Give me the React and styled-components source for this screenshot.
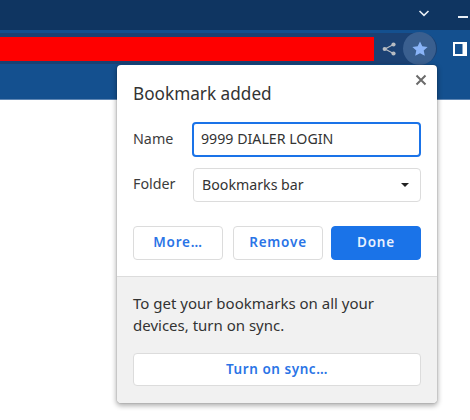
import React from "react";
import styled, { createGlobalStyle } from "styled-components";

const Global = createGlobalStyle`
  html, body { margin: 0; padding: 0; background: #fff; }
  body { font-family: "Noto Sans", "Open Sans", sans-serif; overflow: hidden; }
`;
const Page = styled.div`
  position: relative;
  width: 470px;
  height: 420px;
  background: #fff;
  overflow: hidden;
`;
const TitleBar = styled.header`
  height: 30px;
  background: #0f3561;
  display: flex;
  align-items: flex-start;
  justify-content: flex-end;
`;
const TitleIcons = styled.div`
  display: flex;
  align-items: flex-start;
  gap: 28px;
  padding: 10px 2px 0 0;
`;
const Toolbar = styled.div`
  height: 70px;
  background: #14508f;
  border-bottom: 1px solid #5f86b3;
  box-sizing: border-box;
  padding-top: 3px;
  display: flex;
  align-items: flex-start;
`;
const Omnibox = styled.div`
  width: 437px;
  height: 31px;
  background: #1b4173;
  border-radius: 0 16px 16px 0;
  display: flex;
  align-items: center;
  flex: none;
`;
const RedBar = styled.div`
  width: 374px;
  height: 24px;
  background: #fe0000;
  flex: none;
`;
const ShareSlot = styled.div`
  width: 30px;
  display: flex;
  justify-content: center;
  flex: none;
`;
const StarSlot = styled.div`
  width: 33px;
  height: 33px;
  margin-left: -1px;
  border-radius: 50%;
  background: #3a5f8f;
  display: flex;
  align-items: center;
  justify-content: center;
  flex: none;
`;
const WindowSlot = styled.div`
  margin-left: 16px;
  margin-top: 9px;
  flex: none;
  display: flex;
`;
const Popup = styled.section`
  position: absolute;
  left: 117px;
  top: 65px;
  width: 320px;
  height: 338px;
  box-sizing: border-box;
  background: #fff;
  border-radius: 4px;
  box-shadow: 0 0 1px rgba(0,0,0,.55), 0 2px 5px 1px rgba(0,0,0,.3);
  display: flex;
  flex-direction: column;
  overflow: hidden;
`;
const Main = styled.div`
  position: relative;
  height: 211px;
  flex: none;
  box-sizing: border-box;
  padding: 16px 16px 0;
`;
const Close = styled.button`
  position: absolute;
  top: 9px;
  right: 10px;
  width: 12px;
  height: 12px;
  padding: 0;
  border: 0;
  background: none;
  display: flex;
`;
const Title = styled.h2`
  margin: 0;
  font-size: 17.2px;
  line-height: 26px;
  font-weight: 400;
  color: #333;
`;
const Row = styled.div`
  display: flex;
  align-items: center;
  margin-top: ${p => p.$top}px;
`;
const Label = styled.label`
  width: 59px;
  flex: none;
  font-size: 14.3px;
  line-height: 18px;
  margin-top: -2px;
  color: #3c3c3c;
`;
const NameInput = styled.div`
  width: 229px;
  height: 35px;
  box-sizing: border-box;
  border: 2px solid #1a73e8;
  border-radius: 4px;
  padding: 0 0 2px 7px;
  display: flex;
  align-items: center;
  font-size: 14.2px;
  color: #333;
`;
const Select = styled.div`
  width: 228px;
  height: 34px;
  margin-left: 1px;
  box-sizing: border-box;
  border: 1px solid #dcdcdc;
  border-radius: 4px;
  padding: 0 11px 2px 8px;
  display: flex;
  align-items: center;
  justify-content: space-between;
  font-size: 14.2px;
  color: #333;
`;
const Caret = styled.span`
  width: 0;
  height: 0;
  margin-top: 2px;
  border-left: 4px solid transparent;
  border-right: 4px solid transparent;
  border-top: 4px solid #222;
`;
const Buttons = styled.div`
  display: flex;
  margin-top: 24px;
`;
const Btn = styled.button`
  width: 90px;
  height: 34px;
  margin-right: ${p => p.$gap || 0}px;
  box-sizing: border-box;
  border: 1px solid ${p => (p.$primary ? "#1a73e8" : "#dcdcdc")};
  border-radius: 4px;
  background: ${p => (p.$primary ? "#1a73e8" : "#fff")};
  color: ${p => (p.$primary ? "#e8f0fe" : "#2a74e6")};
  font: 600 13.5px "Noto Sans", sans-serif;
  letter-spacing: 0.8px;
  padding: 0 0 2px;
`;
const Footer = styled.div`
  flex: 1;
  box-sizing: border-box;
  background: #f1f1f1;
  border-top: 1px solid #dcdcdc;
  padding: 15px 16px 0;
`;
const Promo = styled.p`
  margin: 0;
  font-size: 15px;
  line-height: 22px;
  color: #333;
`;
const SyncBtn = styled.button`
  display: block;
  width: 288px;
  height: 33px;
  margin-top: 17px;
  box-sizing: border-box;
  border: 1px solid #dcdcdc;
  border-radius: 4px;
  background: #fff;
  color: #2a74e6;
  font: 600 13.5px "Noto Sans", sans-serif;
  letter-spacing: 0.55px;
  padding: 0 0 2px;
`;

export default function App() {
  return (
    <Page>
      <Global />
      <TitleBar>
        <TitleIcons>
          <svg width="12" height="7" viewBox="0 0 12 7"><path d="M1.5 1 6 5.4 10.5 1" fill="none" stroke="#e8eef5" strokeWidth="1.6" /></svg>
          <svg width="10" height="8" viewBox="0 0 10 8"><rect x="0" y="6" width="10" height="2" fill="#e8eef5" /></svg>
        </TitleIcons>
      </TitleBar>
      <Toolbar>
        <Omnibox>
          <RedBar />
          <ShareSlot>
            <svg width="14" height="14" viewBox="0 0 14 14">
              <path d="M11.5 2.5 3 7l8.5 4.5" fill="none" stroke="#b8bcc2" strokeWidth="1.2" />
              <circle cx="11.5" cy="2.5" r="2.1" fill="#b8bcc2" />
              <circle cx="2.7" cy="7" r="2.1" fill="#b8bcc2" />
              <circle cx="11.5" cy="11.5" r="2.1" fill="#b8bcc2" />
            </svg>
          </ShareSlot>
          <StarSlot>
            <svg width="16" height="15" viewBox="0 0 16 15">
              <path d="M8 0.4 10.3 5.3 15.6 5.9 11.7 9.5 12.8 14.8 8 12.2 3.2 14.8 4.3 9.5 0.4 5.9 5.7 5.3Z" fill="#8ab4f8" />
            </svg>
          </StarSlot>
        </Omnibox>
        <WindowSlot>
          <svg width="14" height="14" viewBox="0 0 14 14">
            <rect x="0" y="0" width="14" height="14" fill="#fff" />
            <rect x="2" y="2" width="7.5" height="10" fill="#14508f" />
          </svg>
        </WindowSlot>
      </Toolbar>
      <Popup>
        <Main>
          <Close aria-label="Close">
            <svg width="12" height="12" viewBox="0 0 12 12"><path d="M1.5 1.5l9 9M10.5 1.5l-9 9" stroke="#6b6b6b" strokeWidth="2" /></svg>
          </Close>
          <Title>Bookmark added</Title>
          <Row $top={15}>
            <Label>Name</Label>
            <NameInput>9999 DIALER LOGIN</NameInput>
          </Row>
          <Row $top={11}>
            <Label>Folder</Label>
            <Select>Bookmarks bar<Caret /></Select>
          </Row>
          <Buttons>
            <Btn $gap={10}>More…</Btn>
            <Btn $gap={8}>Remove</Btn>
            <Btn $primary>Done</Btn>
          </Buttons>
        </Main>
        <Footer>
          <Promo>To get your bookmarks on all your devices, turn on sync.</Promo>
          <SyncBtn>Turn on sync…</SyncBtn>
        </Footer>
      </Popup>
    </Page>
  );
}
